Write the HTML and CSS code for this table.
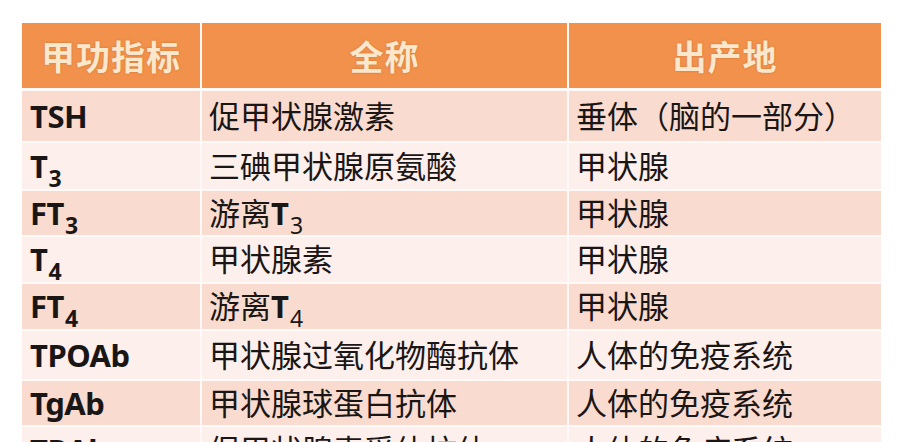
FILE: index.html
```html
<!DOCTYPE html>
<html lang="zh-CN">
<head>
<meta charset="utf-8">
<title>甲功指标</title>
<link rel="stylesheet" href="styles.css">
</head>
<body>
<div class="page">
  <div class="table">
    <div class="cell head">甲功指标</div>
    <div class="cell head">全称</div>
    <div class="cell head">出产地</div>

    <div class="cell dark code"><span>TSH</span></div>
    <div class="cell dark"><span>促甲状腺激素</span></div>
    <div class="cell dark"><span>垂体（脑的一部分）</span></div>

    <div class="cell light code"><span>T<sub>3</sub></span></div>
    <div class="cell light"><span>三碘甲状腺原氨酸</span></div>
    <div class="cell light"><span>甲状腺</span></div>

    <div class="cell dark code"><span>FT<sub>3</sub></span></div>
    <div class="cell dark"><span>游离<b class="lat">T</b><sub>3</sub></span></div>
    <div class="cell dark"><span>甲状腺</span></div>

    <div class="cell light code"><span>T<sub>4</sub></span></div>
    <div class="cell light"><span>甲状腺素</span></div>
    <div class="cell light"><span>甲状腺</span></div>

    <div class="cell dark code"><span>FT<sub>4</sub></span></div>
    <div class="cell dark"><span>游离<b class="lat">T</b><sub>4</sub></span></div>
    <div class="cell dark"><span>甲状腺</span></div>

    <div class="cell light code"><span>TPOAb</span></div>
    <div class="cell light"><span>甲状腺过氧化物酶抗体</span></div>
    <div class="cell light"><span>人体的免疫系统</span></div>

    <div class="cell dark code"><span>TgAb</span></div>
    <div class="cell dark"><span>甲状腺球蛋白抗体</span></div>
    <div class="cell dark"><span>人体的免疫系统</span></div>

    <div class="cell light code"><span>TRAb</span></div>
    <div class="cell light"><span>促甲状腺素受体抗体</span></div>
    <div class="cell light"><span>人体的免疫系统</span></div>
  </div>
</div>
</body>
</html>
```

FILE: styles.css
```css
html, body {
  margin: 0;
  padding: 0;
  background: #ffffff;
}

.page {
  width: 900px;
  height: 442px;
  overflow: hidden;
  padding: 23px 0 0 22px;
  box-sizing: border-box;
  background: #ffffff;
}

.table {
  display: grid;
  grid-template-columns: 178px 365px 312px;
  grid-template-rows: 66px 50px 46px 44px 45px 45px 48px 44px 46px;
  column-gap: 2px;
  row-gap: 2px;
  width: 859px;
  background: #fffaf8;
}

.table > .cell:nth-child(-n+3) {
  margin-bottom: 1px;
}

.cell {
  display: flex;
  align-items: center;
  padding-left: 7px;
  font-family: "Noto Sans", "Noto Sans CJK SC", sans-serif;
  font-size: 31px;
  line-height: 1;
  color: #1b1616;
  white-space: nowrap;
}

.head {
  justify-content: center;
  padding-left: 0;
  background: #f2914b;
  color: #fbe7cc;
  font-weight: 700;
  font-size: 34px;
  letter-spacing: 1px;
  text-shadow: 0 0 2px rgba(180, 95, 40, 0.7);
  padding-top: 2px;
}

.dark {
  background: #f9dbcf;
}

.light {
  background: #fcefec;
}

.code {
  font-weight: 700;
  padding-left: 8px;
  letter-spacing: -0.5px;
}

.lat {
  font-weight: 700;
}

sub {
  font-size: 23px;
  vertical-align: -9px;
  line-height: 0;
  margin-left: 1px;
}
```
